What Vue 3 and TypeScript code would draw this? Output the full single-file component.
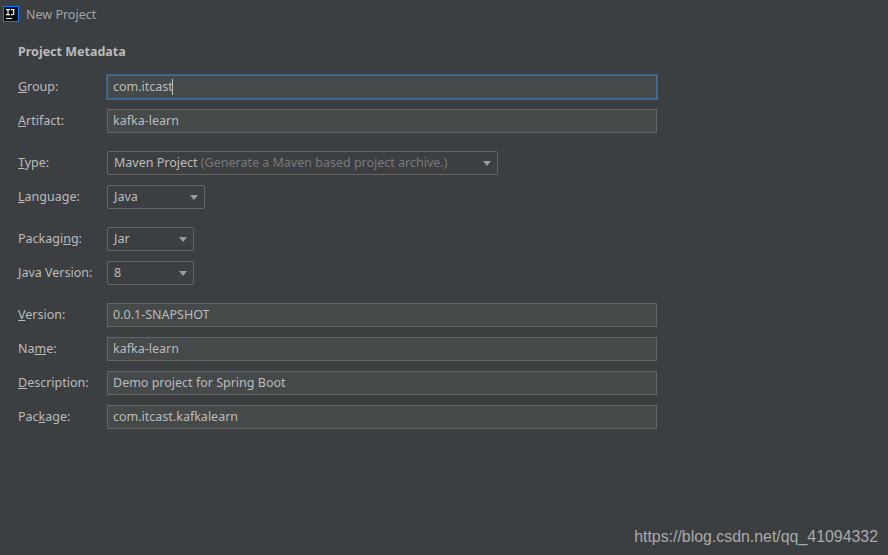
<template>
  <div class="dialog">
    <header class="title-bar">
      <svg class="app-icon" width="16" height="16" viewBox="0 0 16 16">
        <rect x="0.5" y="0.5" width="15" height="15" fill="#0b0c0e" stroke="#087cfa" />
        <path d="M3 3.6h4M5 3.6v5M3 8.6h4M8 3.6h3.6M10.7 3.6v4c0 1-.5 1.2-2.7 1" fill="none" stroke="#f2f2f2" stroke-width="1.2" />
        <rect x="3" y="12" width="6" height="1" fill="#f2f2f2" />
      </svg>
      <span class="title">New Project</span>
    </header>

    <main class="form">
      <h1 class="heading">Project Metadata</h1>

      <section v-for="(group, i) in groups" :key="i" class="group">
        <div v-for="field in group" :key="field.label" class="row">
          <label class="label">
            {{ field.label.slice(0, field.mnemonic) }}<u>{{ field.label[field.mnemonic] }}</u>{{ field.label.slice(field.mnemonic + 1) }}
          </label>

          <div v-if="field.width" class="select" :style="{ width: field.width + 'px' }">
            <span class="select-value">{{ field.value }}</span>
            <span v-if="field.hint" class="hint">&nbsp;{{ field.hint }}</span>
            <span class="arrow"></span>
          </div>
          <div v-else class="input" :class="{ focused: field.focused }">
            {{ field.value }}<span v-if="field.focused" class="caret"></span>
          </div>
        </div>
      </section>
    </main>

    <div class="watermark">https://blog.csdn.net/qq_41094332</div>
  </div>
</template>

<script setup lang="ts">
interface Field {
  label: string;
  mnemonic: number;
  value: string;
  width?: number;
  hint?: string;
  focused?: boolean;
}

const groups: Field[][] = [
  [
    { label: "Group:", mnemonic: 0, value: "com.itcast", focused: true },
    { label: "Artifact:", mnemonic: 0, value: "kafka-learn" }
  ],
  [
    { label: "Type:", mnemonic: 0, value: "Maven Project", width: 391, hint: "(Generate a Maven based project archive.)" },
    { label: "Language:", mnemonic: 0, value: "Java", width: 98 }
  ],
  [
    { label: "Packaging:", mnemonic: 7, value: "Jar", width: 87 },
    { label: "Java Version:", mnemonic: 0, value: "8", width: 87 }
  ],
  [
    { label: "Version:", mnemonic: 0, value: "0.0.1-SNAPSHOT" },
    { label: "Name:", mnemonic: 2, value: "kafka-learn" },
    { label: "Description:", mnemonic: 0, value: "Demo project for Spring Boot" },
    { label: "Package:", mnemonic: 3, value: "com.itcast.kafkalearn" }
  ]
];
</script>

<style>
html,
body {
  margin: 0;
  background: #3c3f41;
}
</style>

<style scoped>
.dialog {
  position: relative;
  width: 888px;
  height: 555px;
  overflow: hidden;
  background: #3c3f41;
  color: #bbbbbb;
  font-family: "Noto Sans", "Open Sans", sans-serif;
  font-size: 12.5px;
}

.title-bar {
  display: flex;
  align-items: center;
  gap: 7px;
  height: 28px;
  padding-left: 3px;
}

.app-icon {
  flex: none;
}

.title {
  color: #a0a4a6;
}

.form {
  padding-left: 18px;
}

.heading {
  margin: 0;
  padding-top: 15px;
  height: 47px;
  line-height: 17px;
  box-sizing: border-box;
  font-size: 12.5px;
  font-weight: 700;
  color: #bbbbbb;
}

.group {
  display: flex;
  flex-direction: column;
  gap: 10px;
  margin-bottom: 18px;
}

.row {
  display: flex;
  align-items: center;
  height: 24px;
}

.label {
  flex: none;
  width: 89px;
  padding-bottom: 1px;
  white-space: pre-wrap;
}

.input {
  box-sizing: border-box;
  display: flex;
  align-items: center;
  width: 550px;
  height: 24px;
  padding: 0 0 1px 5px;
  background: #45494a;
  border: 1px solid #646464;
}

.input.focused {
  border-color: #466d94;
  box-shadow: 0 0 0 1px #3d6185;
}

.caret {
  width: 1px;
  height: 16px;
  margin-left: -1px;
  background: #bbbbbb;
}

.select {
  box-sizing: border-box;
  display: flex;
  align-items: center;
  height: 24px;
  padding: 0 0 1px 6px;
  border: 1px solid #646464;
  border-radius: 2px;
}

.hint {
  color: #787878;
}

.arrow {
  width: 0;
  height: 0;
  margin: 2px 6px 0 auto;
  border-left: 4.5px solid transparent;
  border-right: 4.5px solid transparent;
  border-top: 5px solid #9a9d9f;
}

.watermark {
  position: absolute;
  right: 10px;
  bottom: 9px;
  color: #a8aaab;
  font-family: "Liberation Sans", Arial, sans-serif;
  font-size: 15.9px;
  line-height: 18px;
}
</style>
